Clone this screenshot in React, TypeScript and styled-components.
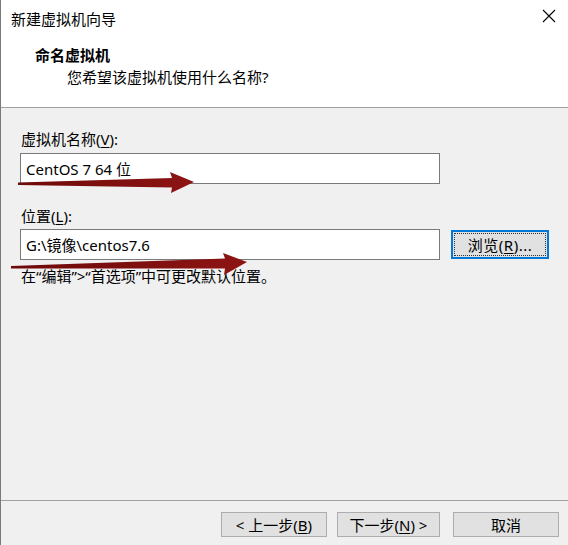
import React from "react";
import styled, { createGlobalStyle } from "styled-components";

const GlobalStyle = createGlobalStyle`
  html, body {
    margin: 0;
    padding: 0;
    background: #f0f0f0;
  }
  body {
    font-family: "Noto Sans", "Noto Sans CJK SC", sans-serif;
    font-size: 15px;
    color: #000;
  }
`;

const Window = styled.div`
  position: relative;
  width: 568px;
  height: 545px;
  box-sizing: border-box;
  border-left: 1px solid #7a7a7a;
  background: #f0f0f0;
  display: flex;
  flex-direction: column;
  overflow: hidden;
`;

const Top = styled.header`
  background: #fff;
  border-bottom: 1px solid #a0a0a0;
  height: 108px;
  box-sizing: border-box;
`;

const TitleBar = styled.div`
  height: 36px;
  display: flex;
  align-items: center;
  justify-content: space-between;
  padding: 0 12px 0 10px;
  font-size: 15px;
`;

const CloseBtn = styled.span`
  display: flex;
  width: 14px;
  height: 14px;
  margin-top: -4px;
`;

const Heading = styled.div`
  padding: 8px 0 0 34px;
  font-weight: bold;
  line-height: 22px;
`;

const SubHeading = styled.div`
  padding-left: 66px;
  line-height: 22px;
`;

const Body = styled.main`
  flex: 1;
  display: flex;
  flex-direction: column;
  padding: 0 19px 0 19px;
`;

const Label = styled.div<{ $top: number }>`
  line-height: 20px;
  margin-top: ${(p) => p.$top}px;
  padding-left: 1px;
`;

const Row = styled.div`
  display: flex;
  align-items: center;
  gap: 11px;
`;

const Input = styled.div<{ $mt: number }>`
  width: 420px;
  height: 31px;
  box-sizing: border-box;
  margin-top: ${(p) => p.$mt}px;
  border: 1px solid #7a7a7a;
  background: #fff;
  display: flex;
  align-items: center;
  padding-left: 5px;
  white-space: nowrap;
`;

const BrowseBtn = styled.button`
  margin-top: 3px;
  width: 98px;
  height: 29px;
  box-sizing: border-box;
  border: 2px solid #0078d7;
  background: #e1e1e1;
  padding: 1px;
  font: inherit;
  display: flex;
`;

const FocusRing = styled.span`
  flex: 1;
  border: 1px dotted #333;
  display: flex;
  align-items: center;
  justify-content: center;
  letter-spacing: 0.5px;
`;

const Hint = styled.div`
  margin-top: 6px;
  line-height: 20px;
  padding-left: 1px;
`;

const Footer = styled.footer`
  height: 45px;
  border-top: 1px solid #a0a0a0;
  display: flex;
  justify-content: flex-end;
  align-items: flex-start;
  padding: 11px 9px 0 0;
  box-sizing: border-box;
`;

const Button = styled.button<{ $ml?: number; $w?: number }>`
  width: ${(p) => p.$w ?? 106}px;
  height: 25px;
  margin-left: ${(p) => p.$ml ?? 0}px;
  border: 1px solid #adadad;
  background: #e1e1e1;
  font: inherit;
  color: #000;
  padding: 0;
  display: flex;
  align-items: center;
  justify-content: center;
`;

const Arrow = styled.svg`
  position: absolute;
  left: 0;
  top: 0;
  pointer-events: none;
`;

const Key = styled.u`
  text-underline-offset: 2px;
`;

const App = () => {
  return (
    <>
      <GlobalStyle />
      <Window>
        <Top>
          <TitleBar>
            <span>新建虚拟机向导</span>
            <CloseBtn>
              <svg width="14" height="14" viewBox="0 0 14 14">
                <path d="M1 1 L13 13 M13 1 L1 13" stroke="#000" strokeWidth="1.1" />
              </svg>
            </CloseBtn>
          </TitleBar>
          <Heading>命名虚拟机</Heading>
          <SubHeading>您希望该虚拟机使用什么名称?</SubHeading>
        </Top>

        <Body>
          <Label $top={21}>
            虚拟机名称(<Key>V</Key>):
          </Label>
          <Input $mt={4}>CentOS 7 64 位</Input>
          <Label $top={22}>
            位置(<Key>L</Key>):
          </Label>
          <Row>
            <Input $mt={3}>G:\镜像\centos7.6</Input>
            <BrowseBtn>
              <FocusRing>
                浏览(<Key>R</Key>)...
              </FocusRing>
            </BrowseBtn>
          </Row>
          <Hint>在“编辑”&gt;“首选项”中可更改默认位置。</Hint>
        </Body>

        <Footer>
          <Button>
            &lt; 上一步(<Key>B</Key>)
          </Button>
          <Button $ml={10} $w={103}>
            下一步(<Key>N</Key>) &gt;
          </Button>
          <Button $ml={13}>取消</Button>
        </Footer>

        <Arrow width="568" height="545" viewBox="0 0 568 545">
          <defs>
            <linearGradient id="redShade" x1="0" y1="0" x2="1" y2="0">
              <stop offset="0" stopColor="#6e0a0a" />
              <stop offset="1" stopColor="#8e1414" />
            </linearGradient>
          </defs>
          <path
            d="M17 182.5 L171 178 L169 172 L193 182 L170 193 L171 187.5 L17 185 Z"
            fill="url(#redShade)"
          />
          <path
            d="M10 266 L224 258.5 L222 253 L246 262 L223 275 L224 268.5 L10 268.5 Z"
            fill="url(#redShade)"
          />
        </Arrow>
      </Window>
    </>
  );
};

export default App;
